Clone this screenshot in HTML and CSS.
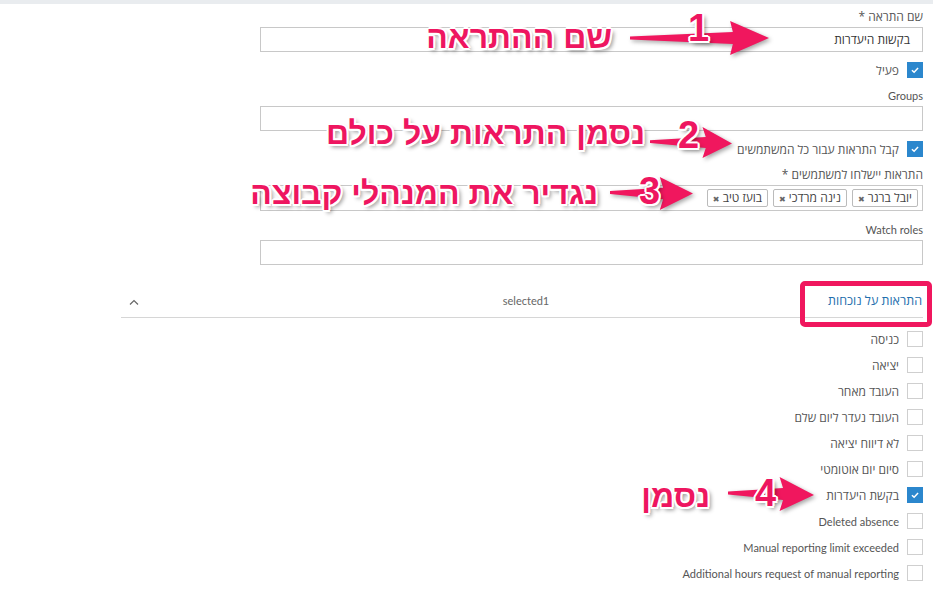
FILE: index.html
```html
<!DOCTYPE html>
<html lang="he">
<head>
    <meta charset="UTF-8">
    <meta name="viewport" content="width=device-width, initial-scale=1.0">
    <title>הגדרת התראה</title>
    <link rel="stylesheet" href="styles.css">
</head>
<body>
    <div class="topbar"></div>

    <div class="page">
        <!-- Alert details -->
        <div class="alert-form">
            <div class="field first">
                <div class="field-label">שם התראה *</div>
                <div class="input">בקשות היעדרות</div>
            </div>
            <div class="check-row">
                <span class="box on"><svg viewBox="0 0 16 16"><polyline points="4.5,8.2 7,10.6 11.5,5.8"/></svg></span>
                <span>פעיל</span>
            </div>
            <div class="field">
                <div class="field-label en">Groups</div>
                <div class="input"></div>
            </div>
            <div class="check-row">
                <span class="box on"><svg viewBox="0 0 16 16"><polyline points="4.5,8.2 7,10.6 11.5,5.8"/></svg></span>
                <span>קבל התראות עבור כל המשתמשים</span>
            </div>
            <div class="field">
                <div class="field-label">התראות יישלחו למשתמשים *</div>
                <div class="input tags">
                    <span class="tag">יובל ברגר <b>✖</b></span>
                    <span class="tag">נינה מרדכי <b>✖</b></span>
                    <span class="tag">בועז טיב <b>✖</b></span>
                </div>
            </div>
            <div class="field watch">
                <div class="field-label en">Watch roles</div>
                <div class="input"></div>
            </div>
        </div>

        <!-- Event tabs -->
        <div class="tabs">
            <div class="tab active">התראות על נוכחות</div>
            <div class="tab-count en">selected1</div>
            <div class="tab-toggle"><svg viewBox="0 0 10 6"><polyline points="1,5.5 5,1.5 9,5.5"/></svg></div>
        </div>

        <ul class="events">
            <li><span class="box"></span>כניסה</li>
            <li><span class="box"></span>יציאה</li>
            <li><span class="box"></span>העובד מאחר</li>
            <li><span class="box"></span>העובד נעדר ליום שלם</li>
            <li><span class="box"></span>לא דיווח יציאה</li>
            <li><span class="box"></span>סיום יום אוטומטי</li>
            <li><span class="box on"><svg viewBox="0 0 16 16"><polyline points="4.5,8.2 7,10.6 11.5,5.8"/></svg></span>בקשת היעדרות</li>
            <li class="en"><span class="box"></span>Deleted absence</li>
            <li class="en"><span class="box"></span>Manual reporting limit exceeded</li>
            <li class="en"><span class="box"></span>Additional hours request of manual reporting</li>
        </ul>
    </div>

    <!-- Annotations drawn over the screenshot -->
    <div class="mark-box"></div>

    <svg class="arrow arrow-1" viewBox="0 0 100 34" preserveAspectRatio="none"><polygon points="0,15.5 74,11 72,0 100,17 72,34 74,23 0,18.5"/></svg>
    <svg class="arrow arrow-2" viewBox="0 0 100 34" preserveAspectRatio="none"><polygon points="0,14.5 68,11 64,0 100,18 64,34 68,23 0,17.5"/></svg>
    <svg class="arrow arrow-3" viewBox="0 0 100 34" preserveAspectRatio="none"><polygon points="0,14.5 64,11 60,0 100,17 60,34 64,23 0,17.5"/></svg>
    <svg class="arrow arrow-4" viewBox="0 0 100 34" preserveAspectRatio="none"><polygon points="0,14.5 64,11 60,0 100,18 60,34 64,23 0,17.5"/></svg>

    <div class="num num-1">1</div>
    <div class="num num-2">2</div>
    <div class="num num-3">3</div>
    <div class="num num-4">4</div>

    <div class="note note-1">שם ההתראה</div>
    <div class="note note-2">נסמן התראות על כולם</div>
    <div class="note note-3">נגדיר את המנהלי קבוצה</div>
    <div class="note note-4">נסמן</div>
</body>
</html>
```

FILE: styles.css
```css
body {
    margin: 0;
    position: relative;
    height: 595px;
    overflow: hidden;
    background: #fff;
    color: #555;
    font-family: "Open Sans", "Liberation Sans", sans-serif;
    font-size: 12px;
}
.en {
    font-family: Lato, "Open Sans", sans-serif;
    font-size: 11px;
}
.topbar {
    height: 4px;
    background: #e9ecef;
}
.page {
    direction: rtl;
    padding: 5px 10px 0 0;
}

/* form */
.alert-form {
    width: 663px;
}
.field {
    margin-top: 10px;
}
.field.first {
    margin-top: 0;
}
.field.watch {
    margin-top: 11px;
}
.field-label {
    line-height: 16px;
    margin-bottom: 2px;
}
.input {
    height: 25px;
    box-sizing: border-box;
    border: 1px solid #c8c8c8;
    padding: 0 12px;
    line-height: 23px;
    color: #333;
}
.input.tags {
    height: 26px;
    padding: 0 4px;
    display: flex;
    align-items: center;
    gap: 5px;
}
.tag {
    height: 18px;
    box-sizing: border-box;
    border: 1px solid #bbb;
    border-radius: 2px;
    padding: 0 5px;
    line-height: 16px;
    color: #444;
    white-space: nowrap;
}
.tag b {
    font-family: "DejaVu Sans", sans-serif;
    font-size: 8px;
    color: #666;
}
.check-row {
    display: flex;
    align-items: center;
    gap: 8px;
    height: 16px;
    margin-top: 10px;
}
.box {
    flex: none;
    width: 16px;
    height: 16px;
    box-sizing: border-box;
    border: 1px solid #cfcfcf;
    background: #fff;
}
.box.on {
    background: #2b87cd;
    border-color: #2b87cd;
}
.box svg {
    display: block;
    width: 14px;
    height: 14px;
    fill: none;
    stroke: #fff;
    stroke-width: 1.7;
}

/* tabs */
.tabs {
    width: 802px;
    margin-top: 19px;
    height: 33px;
    border-bottom: 1px solid #d6d6d6;
    display: grid;
    grid-template-columns: 1fr auto 1fr;
    align-items: center;
}
.tab.active {
    color: #1f6fae;
    font-size: 12.5px;
    padding-right: 1px;
}
.tab-count {
    color: #666;
    padding-left: 8px;
}
.tab-toggle {
    justify-self: end;
    padding-left: 8px;
    padding-top: 3px;
    line-height: 0;
}
.tab-toggle svg {
    width: 10px;
    height: 6px;
    fill: none;
    stroke: #666;
    stroke-width: 1.2;
}

/* event checkboxes */
.events {
    list-style: none;
    margin: 8px 0 0;
    padding: 0;
}
.events li {
    height: 26px;
    display: flex;
    align-items: center;
    gap: 8px;
}

/* annotations */
.mark-box {
    position: absolute;
    left: 800px;
    top: 281px;
    width: 132px;
    height: 46px;
    box-sizing: border-box;
    border: 5px solid #f0175e;
    border-radius: 5px;
}
.arrow {
    position: absolute;
    fill: #f0175e;
    filter: drop-shadow(2px 2px 2px rgba(0, 0, 0, 0.35));
}
.arrow-1 { left: 630px; top: 21px; width: 139px; height: 34px; }
.arrow-2 { left: 650px; top: 127px; width: 82px; height: 31px; }
.arrow-3 { left: 610px; top: 177px; width: 83px; height: 33px; }
.arrow-4 { left: 728px; top: 477px; width: 86px; height: 34px; }

.num,
.note {
    position: absolute;
    color: #ee1660;
    font-family: "Liberation Sans", "DejaVu Sans", sans-serif;
    font-weight: bold;
    line-height: 1;
    white-space: nowrap;
    text-shadow: 2px 0 #fff, -2px 0 #fff, 0 2px #fff, 0 -2px #fff,
        1.5px 1.5px #fff, -1.5px 1.5px #fff, 1.5px -1.5px #fff, -1.5px -1.5px #fff,
        3px 3px 4px rgba(0, 0, 0, 0.45);
}
.num {
    font-size: 38px;
}
.num-1 { left: 688px; top: 9px; }
.num-2 { left: 678px; top: 116px; }
.num-3 { left: 639px; top: 172px; }
.num-4 { left: 755px; top: 474px; }

.note {
    direction: rtl;
    font-size: 32px;
}
.note-1 { right: 321px; top: 21px; }
.note-2 { right: 288px; top: 117px; }
.note-3 { right: 335px; top: 177px; }
.note-4 { right: 223px; top: 480px; }
```
